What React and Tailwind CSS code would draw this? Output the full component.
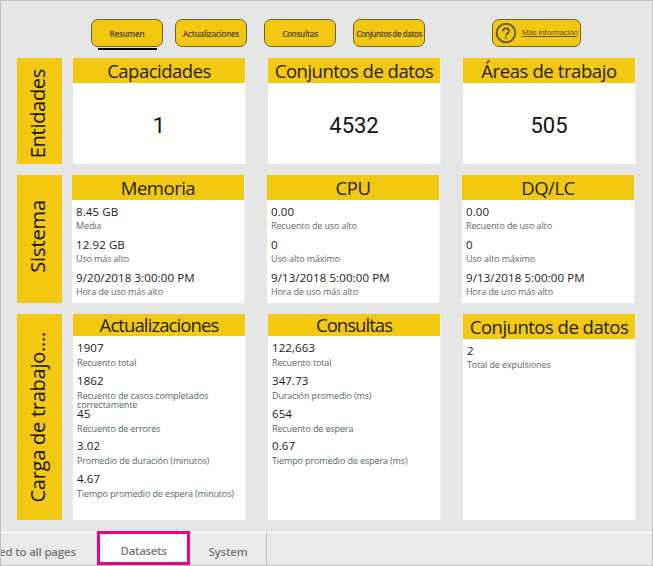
function NavButton({ children, className = "tracking-[-0.15px]" }) {
  return (
    <button
      className={
        "flex h-[28px] w-[72px] items-center justify-center rounded-[7px] border-[1.5px] border-[#6b6338] bg-[#f2c811] pt-[2px] text-[8px] font-semibold whitespace-nowrap text-[#4a421a] " +
        className
      }
    >
      {children}
    </button>
  );
}

function Row({ label, className = "", labelClass = "", children }) {
  return (
    <div className={"flex pl-[16px] " + className}>
      <div className={"flex w-[45px] items-center justify-center bg-[#f2c811] pr-[3px] " + labelClass}>
        <span className="rotate-180 text-[20px] leading-[24px] whitespace-nowrap text-[#15140c] [writing-mode:vertical-rl]">
          {label}
        </span>
      </div>
      {children}
    </div>
  );
}

function Card({
  title,
  titleClass = "tracking-[-0.5px]",
  headClass = "h-[25px] pt-[2px]",
  className = "",
  children,
}) {
  return (
    <section className={"flex w-[173px] flex-col border-r border-[#f0f0f0] bg-white " + className}>
      <h2
        className={
          "flex items-center justify-center bg-[#f2c811] text-[18.5px] leading-none font-normal whitespace-nowrap text-[#26230f] " +
          headClass
        }
      >
        <span className={titleClass}>{title}</span>
      </h2>
      {children}
    </section>
  );
}

function BigNumber({ children }) {
  return (
    <div className="flex flex-1 items-center justify-center pt-[4px] font-['Roboto',sans-serif] text-[22px] leading-none text-[#111]">
      {children}
    </div>
  );
}

function Metrics({ items, labelClass = "pt-[2px] text-[#666]" }) {
  return (
    <dl className="flex flex-col pt-[3px] pl-[4px]">
      {items.map(([value, label]) => (
        <div key={label} className="h-[32.8px]">
          <dt className="h-[16px] text-[11.5px] leading-[17px] tracking-[0.1px] whitespace-nowrap text-[#1a1a1a]">
            {value}
          </dt>
          <dd className={"text-[9px] leading-[9px] tracking-[-0.12px] " + labelClass}>{label}</dd>
        </div>
      ))}
    </dl>
  );
}

export default function App() {
  return (
    <div className="flex h-[566px] w-[653px] flex-col overflow-hidden border border-[#c0c0c0] bg-[#e6e6e6] font-['Open_Sans','Noto_Sans',sans-serif]">
      <nav className="flex h-[57px] items-start pt-[18px] pl-[90px]">
        <div className="flex flex-col items-center">
          <NavButton>Resumen</NavButton>
          <div className="mt-px h-[2px] w-[59px] bg-black" />
        </div>
        <NavButton className="ml-[12px] tracking-[-0.25px]">Actualizaciones</NavButton>
        <NavButton className="ml-[17px] tracking-[-0.25px]">Consultas</NavButton>
        <NavButton className="ml-[17px] tracking-[-0.5px]">Conjuntos de datos</NavButton>
        <button className="ml-[67px] flex h-[28px] w-[89px] items-center rounded-[7px] border-[1.5px] border-[#6b6338] bg-[#f2c811] pl-[2px] whitespace-nowrap text-[#5c5634]">
          <svg width="22" height="22" viewBox="0 0 22 22" fill="none" stroke="#665f3a" className="shrink-0">
            <circle cx="11" cy="11" r="9.3" strokeWidth="2" />
            <path d="M8 9.2c0-3.8 6-3.8 6 0 0 2.2-3 2.3-3 4.4" strokeWidth="2" />
            <path d="M10 15.8h2" strokeWidth="2" />
          </svg>
          <span className="ml-[5px] font-['Liberation_Sans',sans-serif] text-[8px] tracking-[-0.2px] underline">
            Más información
          </span>
        </button>
      </nav>

      <Row label="Entidades" className="h-[106px]" labelClass="pt-[5px] tracking-[-0.3px]">
        <Card title="Capacidades" className="ml-[11px]">
          <BigNumber>1</BigNumber>
        </Card>
        <Card title="Conjuntos de datos" className="ml-[22px]">
          <BigNumber>4532</BigNumber>
        </Card>
        <Card title="Áreas de trabajo" titleClass="tracking-[-0.4px]" className="ml-[22px]">
          <BigNumber>505</BigNumber>
        </Card>
      </Row>

      <Row label="Sistema" className="mt-[11px] h-[128px]" labelClass="pb-[6px] tracking-[-0.1px]">
        <Card title="Memoria" className="ml-[10px]">
          <Metrics
            items={[
              ["8.45 GB", "Media"],
              ["12.92 GB", "Uso más alto"],
              ["9/20/2018 3:00:00 PM", "Hora de uso más alto"],
            ]}
          />
        </Card>
        <Card title="CPU" className="ml-[22px]">
          <Metrics
            items={[
              ["0.00", "Recuento de uso alto"],
              ["0", "Uso alto máximo"],
              ["9/13/2018 5:00:00 PM", "Hora de uso más alto"],
            ]}
          />
        </Card>
        <Card title="DQ/LC" className="ml-[22px]">
          <Metrics
            items={[
              ["0.00", "Recuento de uso alto"],
              ["0", "Uso alto máximo"],
              ["9/13/2018 5:00:00 PM", "Hora de uso más alto"],
            ]}
          />
        </Card>
      </Row>

      <Row label="Carga de trabajo...." className="mt-[11px] h-[206px]" labelClass="tracking-[-0.25px]">
        <Card
          title="Actualizaciones"
          titleClass="tracking-[-0.9px]"
          headClass="h-[22px]"
          className="ml-[11px]"
        >
          <Metrics
            labelClass="pt-[3px] text-[#566]"
            items={[
              ["1907", "Recuento total"],
              ["1862", "Recuento de casos completados correctamente"],
              ["45", "Recuento de errores"],
              ["3.02", "Promedio de duración (minutos)"],
              ["4.67", "Tiempo promedio de espera (minutos)"],
            ]}
          />
        </Card>
        <Card title="Consultas" titleClass="tracking-[-0.95px]" headClass="h-[22px]" className="ml-[22px]">
          <Metrics
            labelClass="pt-[3px] text-[#566]"
            items={[
              ["122,663", "Recuento total"],
              ["347.73", "Duración promedio (ms)"],
              ["654", "Recuento de espera"],
              ["0.67", "Tiempo promedio de espera (ms)"],
            ]}
          />
        </Card>
        <Card title="Conjuntos de datos" className="ml-[22px]">
          <Metrics items={[["2", "Total de expulsiones"]]} />
        </Card>
      </Row>

      <footer className="mt-[11px] flex h-[34px] items-start text-[11.5px] font-semibold whitespace-nowrap text-[#777]">
        <div className="mt-px flex h-[33px] w-[96px] items-center border-t border-white bg-[#eaeaea] pt-[5px] tracking-[-0.2px]">
          <span className="-ml-[2px]">ed to all pages</span>
        </div>
        <div className="flex h-[34px] w-[93px] items-center justify-center border-3 border-[#ec008c] bg-white pt-[6px] tracking-[-0.35px]">
          Datasets
        </div>
        <div className="mt-px flex h-[33px] w-[77px] items-center justify-center border-t border-r border-t-white border-r-[#c0c0c0] bg-[#eaeaea] pt-[5px] tracking-[-0.2px]">
          System
        </div>
        <div className="mt-px h-[33px] flex-1 border-t border-white bg-[#eaeaea]" />
      </footer>
    </div>
  );
}
